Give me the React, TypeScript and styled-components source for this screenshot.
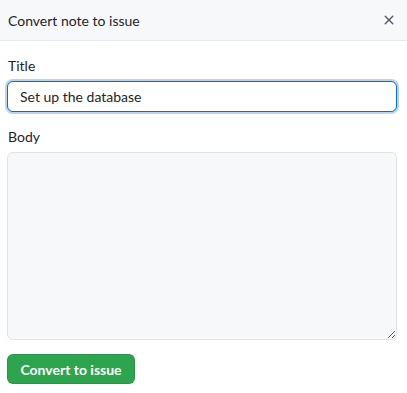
import React from "react";
import styled, { createGlobalStyle } from "styled-components";

const Global = createGlobalStyle`
  html, body { margin: 0; padding: 0; background: #ffffff; }
  body { font-family: "Segoe UI", Lato, "Noto Sans", sans-serif; color: #1f2328; }
  * { box-sizing: border-box; }
`;

const Dialog = styled.div`
  width: 407px;
  height: 393px;
  display: flex;
  flex-direction: column;
  background: #ffffff;
`;

const Header = styled.div`
  height: 41px;
  display: flex;
  align-items: center;
  justify-content: space-between;
  padding: 0 6px 0 8px;
  background: #f6f8fa;
  border-bottom: 1px solid #e6e9ee;
`;

const HeaderTitle = styled.h1`
  margin: 0;
  font-size: 14px;
  font-weight: 400;
  color: #1f2328;
`;

const CloseButton = styled.button`
  width: 24px;
  height: 24px;
  border: 0;
  padding: 0;
  background: transparent;
  display: flex;
  align-items: center;
  justify-content: center;
  color: #57606a;
`;

const Form = styled.form`
  display: flex;
  flex-direction: column;
  padding: 16px 10px 0 7px;
`;

const Label = styled.label`
  font-size: 14px;
  font-weight: 400;
  color: #1f2328;
  padding-left: 1px;
  margin-bottom: 7px;
`;

const TitleInput = styled.input`
  height: 31px;
  width: 100%;
  padding: 0 8px 0 12px;
  border: 1px solid #0969da;
  border-radius: 6px;
  box-shadow: 0 0 0 2px #b6d4f5;
  font-family: inherit;
  font-size: 14px;
  color: #1f2328;
  outline: none;
  background: #ffffff;
  margin-bottom: 16px;
`;

const BodyArea = styled.textarea`
  width: 100%;
  height: 188px;
  border: 1px solid #dde2e7;
  border-radius: 6px;
  background: #f6f8fa;
  resize: vertical;
  font-family: inherit;
  font-size: 14px;
  outline: none;
  margin-bottom: 14px;
`;

const SubmitButton = styled.button`
  align-self: flex-start;
  width: 128px;
  height: 30px;
  border: 1px solid rgba(31, 35, 40, 0.12);
  border-radius: 6px;
  background: #2da44e;
  color: #ffffff;
  font-family: inherit;
  font-size: 14px;
  font-weight: 700;
  padding: 0;
`;

export default function App() {
  return (
    <>
      <Global />
      <Dialog>
        <Header>
          <HeaderTitle>Convert note to issue</HeaderTitle>
          <CloseButton aria-label="Close">
            <svg width="16" height="16" viewBox="0 0 16 16" fill="currentColor">
              <path d="M3.72 3.72a.75.75 0 0 1 1.06 0L8 6.94l3.22-3.22a.749.749 0 0 1 1.275.326.749.749 0 0 1-.215.734L9.06 8l3.22 3.22a.749.749 0 0 1-.326 1.275.749.749 0 0 1-.734-.215L8 9.06l-3.22 3.22a.751.751 0 0 1-1.042-.018.751.751 0 0 1-.018-1.042L6.94 8 3.72 4.78a.75.75 0 0 1 0-1.06Z" />
            </svg>
          </CloseButton>
        </Header>
        <Form onSubmit={(e) => e.preventDefault()}>
          <Label htmlFor="title">Title</Label>
          <TitleInput id="title" defaultValue="Set up the database" />
          <Label htmlFor="body">Body</Label>
          <BodyArea id="body" />
          <SubmitButton type="submit">Convert to issue</SubmitButton>
        </Form>
      </Dialog>
    </>
  );
}
